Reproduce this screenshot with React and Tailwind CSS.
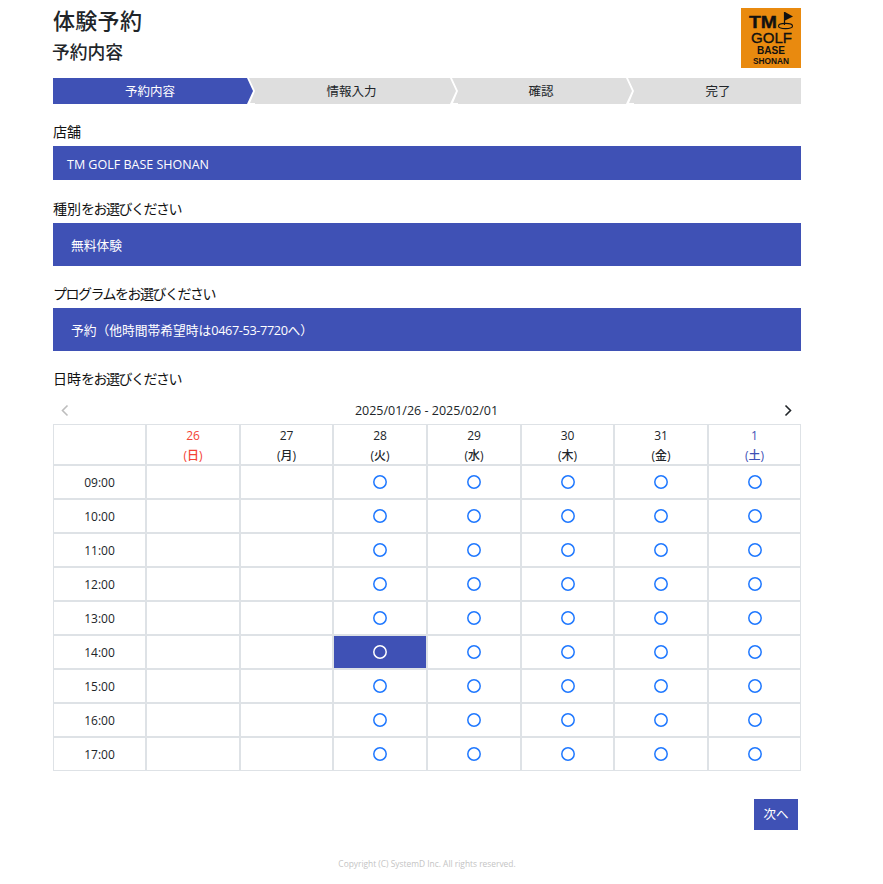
const days = [
  { d: "26", w: "(日)", c: "text-[#f44336]" },
  { d: "27", w: "(月)", c: "text-[#212529]" },
  { d: "28", w: "(火)", c: "text-[#212529]" },
  { d: "29", w: "(水)", c: "text-[#212529]" },
  { d: "30", w: "(木)", c: "text-[#212529]" },
  { d: "31", w: "(金)", c: "text-[#212529]" },
  { d: "1", w: "(土)", c: "text-[#3f51b5]" },
];
const times = ["09:00", "10:00", "11:00", "12:00", "13:00", "14:00", "15:00", "16:00", "17:00"];
const widths = ["w-[94px]", "w-[93px]", "w-[94px]", "w-[94px]", "w-[93px]", "w-[94px]", "w-[93px]"];

function Logo() {
  return (
    <svg width="60" height="60" viewBox="0 0 60 60" className="block shrink-0">
      <rect width="60" height="60" fill="#e98a0f" />
      <text x="8" y="20" fontFamily="Liberation Sans" fontWeight="700" fontSize="17" fill="#111" stroke="#111" strokeWidth="0.4" textLength="28" lengthAdjust="spacingAndGlyphs">TM</text>
      <path d="M43.5 4V17" stroke="#111" strokeWidth="1.2" />
      <path d="M44 4L52 8.5L44 12.5Z" fill="#111" />
      <ellipse cx="44.5" cy="18" rx="7" ry="2.6" fill="none" stroke="#111" strokeWidth="1.1" />
      <text x="10" y="35" fontFamily="Liberation Sans" fontSize="15.5" fill="#111" stroke="#111" strokeWidth="0.35" textLength="41" lengthAdjust="spacingAndGlyphs">GOLF</text>
      <text x="16" y="46" fontFamily="Liberation Sans" fontWeight="700" fontSize="11" fill="#111" textLength="28" lengthAdjust="spacingAndGlyphs">BASE</text>
      <text x="12" y="56" fontFamily="Liberation Sans" fontWeight="700" fontSize="9.5" fill="#111" textLength="36" lengthAdjust="spacingAndGlyphs">SHONAN</text>
    </svg>
  );
}

function Circle({ white }) {
  return (
    <svg width="14" height="14" viewBox="0 0 14 14" fill="none" className="block mx-auto" stroke={white ? "#ffffff" : "#1f78ff"} strokeWidth="1.5">
      <circle cx="7" cy="7" r="6.2" />
    </svg>
  );
}

function Step({ children, className }) {
  return <div className={`h-[26px] flex items-center justify-center pt-[2px] text-[12.5px] ${className}`}>{children}</div>;
}

function Label({ head, kana, className }) {
  return (
    <div className={`text-[14px] leading-5 text-[#111] ${className}`}>
      {head}
      <span className="tracking-[-1.5px]">{kana}</span>
    </div>
  );
}

export default function App() {
  return (
    <div className="w-[883px] h-[884px] bg-white text-[#212529] overflow-hidden" style={{ fontFamily: '"Open Sans","Noto Sans CJK JP",sans-serif' }}>
      <div className="w-[748px] ml-[53px] pt-2">
        <div className="flex justify-between items-start h-[60px]">
          <div>
            <h1 className="text-[22px] leading-[30px] -mt-[3px] font-medium tracking-[0.3px]">体験予約</h1>
            <h2 className="text-[17.75px] leading-[28px] mt-[3px] -ml-[1px] font-medium">予約内容</h2>
          </div>
          <Logo />
        </div>

        <div className="flex mt-[10px]">
          <Step className="w-[200px] bg-[#3f51b5] text-white pr-[6px] [clip-path:polygon(0_0,194px_0,200px_13px,194px_26px,0_26px)]">予約内容</Step>
          <Step className="w-[207px] -ml-[4px] pr-[2px] bg-[#dedede] [clip-path:polygon(0_0,201px_0,207px_13px,201px_26px,6px_26px,6px_25px,1px_25px,6px_13px)]">情報入力</Step>
          <Step className="w-[180px] -ml-[4px] pr-[2px] bg-[#dedede] [clip-path:polygon(0_0,174px_0,180px_13px,174px_26px,6px_26px,6px_25px,1px_25px,6px_13px)]">確認</Step>
          <Step className="flex-1 -ml-[4px] pl-[7px] bg-[#dedede] [clip-path:polygon(0_0,100%_0,100%_100%,6px_100%,6px_25px,1px_25px,6px_13px)]">完了</Step>
        </div>

        <Label head="店舗" kana="" className="mt-[18px]" />
        <div className="mt-[4px] h-[34px] bg-[#3f51b5] text-white text-[12.5px] flex items-center px-[14px] pt-[4px]">TM GOLF BASE SHONAN</div>

        <Label head="種別" kana="をお選びください" className="mt-[19px]" />
        <div className="mt-[4px] h-[43px] bg-[#3f51b5] text-white text-[12.75px] flex items-center px-[18px] pt-[2px]">無料体験</div>

        <Label head="" kana="プログラムをお選びください" className="mt-[18px]" />
        <div className="mt-[4px] h-[43px] bg-[#3f51b5] text-white text-[12.75px] flex items-center px-[18px] pt-[2px]">
          <span>予約（他時間帯希望時は<span className="tracking-[-0.4px]">0467-53-7720</span>へ）</span>
        </div>

        <Label head="日時" kana="をお選びください" className="mt-[18px]" />

        <div className="mt-[11px] h-[20px] flex items-center justify-between pl-[5px] pr-[6px] text-[12.5px]">
          <svg width="14" height="14" viewBox="0 0 14 14" fill="none" stroke="#bdbdbd" strokeWidth="1.6"><path d="M9.5 2.5L4.5 7.5L9.5 12.5" /></svg>
          <span className="pt-[2px]">2025/01/26 - 2025/02/01</span>
          <svg width="14" height="14" viewBox="0 0 14 14" fill="none" stroke="#212529" strokeWidth="1.6"><path d="M4.5 2.5L9.5 7.5L4.5 12.5" /></svg>
        </div>

        <table className="mt-[4px] w-[748px] table-fixed border-separate border-spacing-0 text-[12px]">
          <thead>
            <tr>
              <th className="w-[93px] border border-[#dee2e6] font-normal h-[41px]"></th>
              {days.map((x, i) => (
                <th key={x.d} className={`${widths[i]} border border-[#dee2e6] font-medium h-[41px] p-0 pt-[1px] ${x.c}`}>
                  <div className="leading-[20px]">{x.d}</div>
                  <div className="h-[18px] leading-[20px]">{x.w}</div>
                </th>
              ))}
            </tr>
          </thead>
          <tbody>
            {times.map((t) => (
              <tr key={t}>
                <td className="border border-[#dee2e6] h-[34px] p-0 pt-[2px] text-center">{t}</td>
                {days.map((x, i) => {
                  const sel = t === "14:00" && i === 2;
                  return (
                    <td key={x.d} className={`border border-[#dee2e6] h-[34px] p-0 text-center ${sel ? "bg-[#3f51b5]" : ""}`}>
                      {i >= 2 && <Circle white={sel} />}
                    </td>
                  );
                })}
              </tr>
            ))}
          </tbody>
        </table>

        <div className="mt-[28px] flex justify-end pr-[3px]">
          <div className="w-[44px] h-[31px] bg-[#3f51b5] text-white text-[12.5px] flex items-center justify-center pt-[1px]">次へ</div>
        </div>
        <div className="mt-[28px] w-[748px] text-center text-[8.4px] leading-3 text-[#c4c4c4]">Copyright (C) SystemD Inc. All rights reserved.</div>
      </div>
    </div>
  );
}
